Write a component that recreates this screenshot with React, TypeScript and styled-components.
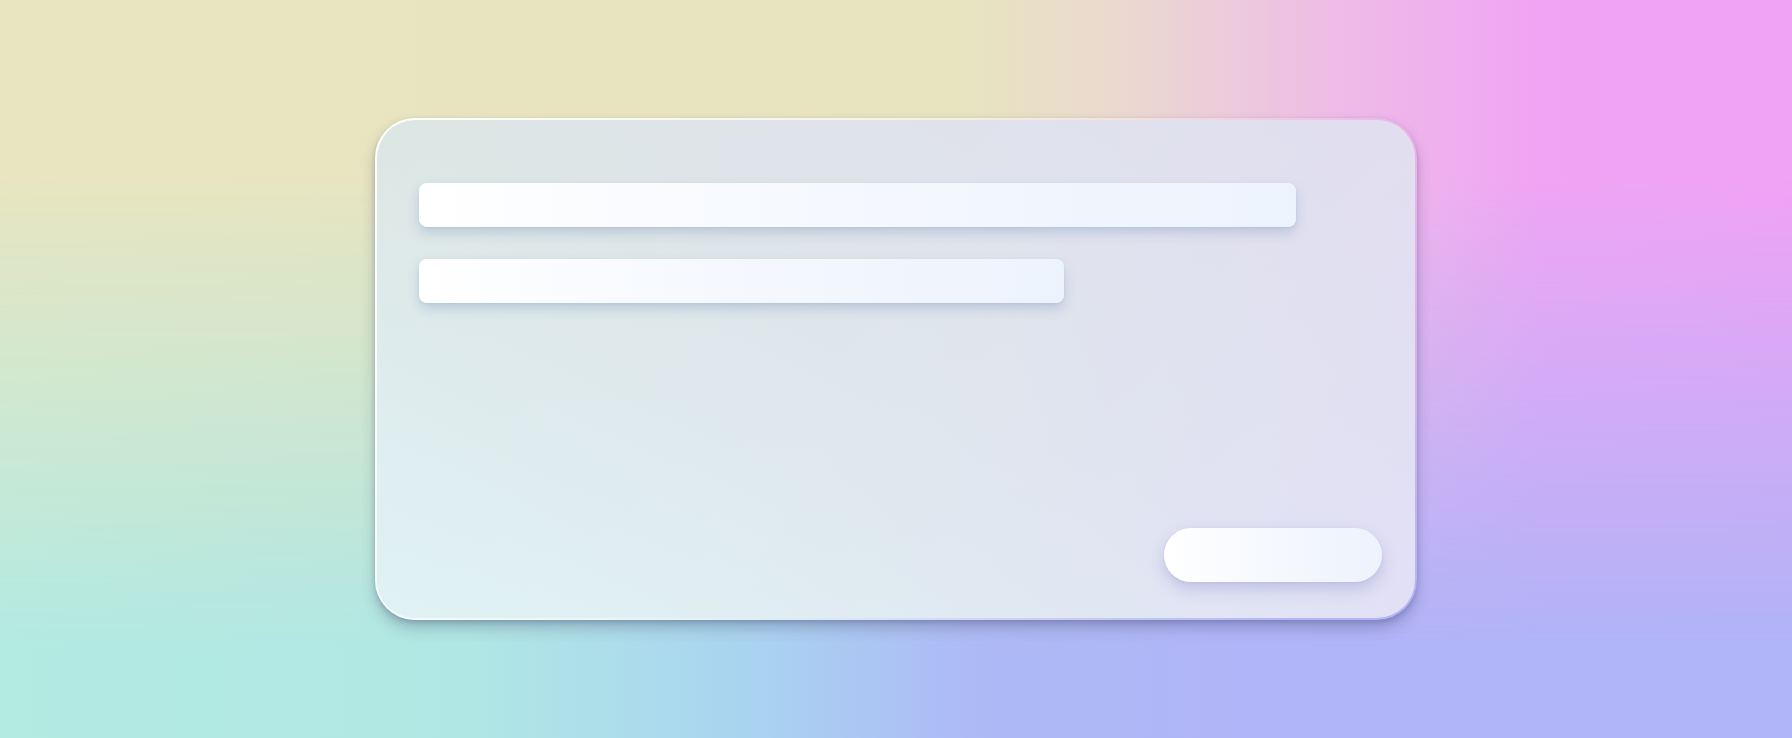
import styled, { createGlobalStyle } from 'styled-components'

const GlobalStyle = createGlobalStyle`
    html, body {
        margin: 0;
        padding: 0;
        height: 100%;
        font-family: 'Inter', 'Liberation Sans', sans-serif;
    }
    #root {
        height: 100%;
    }
`

export default function App() {
    return (
        <>
            <GlobalStyle />
            <Page>
                <Card>
                    <Lines>
                        <Line $width={877} />
                        <Line $width={645} />
                    </Lines>
                    <Footer>
                        <PillButton type="button" aria-label="Continue" />
                    </Footer>
                </Card>
            </Page>
        </>
    )
}

const Page = styled.main`
    position: relative;
    width: 100vw;
    height: 100vh;
    overflow: hidden;
    display: flex;
    align-items: center;
    justify-content: center;
    background: linear-gradient(
        to right,
        #b3ebe3 0%,
        #b0e7e4 26%,
        #a9d5f0 41%,
        #adbaf6 54%,
        #b0b4f8 70%,
        #b0b4f8 100%
    );

    &::before {
        content: '';
        position: absolute;
        inset: 0;
        background: linear-gradient(
            to right,
            #e8e5c0 0%,
            #e8e4c0 54%,
            #ebd6d2 64%,
            #eebde6 74%,
            #f0a4f4 86%,
            #f0a2f4 100%
        );
        -webkit-mask-image: linear-gradient(to bottom, #000 24%, transparent 88%);
        mask-image: linear-gradient(to bottom, #000 24%, transparent 88%);
    }
`

const Card = styled.section`
    position: relative;
    box-sizing: border-box;
    width: 1042px;
    height: 502px;
    padding: 63px 33px 36px 42px;
    display: flex;
    flex-direction: column;
    border-radius: 40px;
    border: 2px solid transparent;
    background:
        linear-gradient(
                to top right,
                rgba(224, 244, 246, 0.85) 0%,
                rgba(224, 240, 246, 0) 50%,
                rgba(226, 216, 240, 0.5) 100%
            )
            padding-box,
        linear-gradient(135deg, #dce6e3 0%, #dfe6ec 50%, #e2e0f6 100%) padding-box,
        linear-gradient(
                100deg,
                rgba(255, 255, 255, 0.95) 0%,
                rgba(255, 255, 255, 0.65) 40%,
                rgba(255, 255, 255, 0) 90%
            )
            border-box;
    box-shadow:
        0 8px 14px rgba(60, 66, 110, 0.3),
        0 2px 4px rgba(60, 70, 110, 0.22);
`

const Lines = styled.div`
    display: flex;
    flex-direction: column;
    gap: 32px;
`

const Line = styled.div<{ $width: number }>`
    width: ${p => p.$width}px;
    height: 44px;
    border-radius: 8px;
    background: linear-gradient(to right, #ffffff 0%, #f6f9fe 40%, #edf3fd 100%);
    box-shadow:
        0 6px 12px rgba(110, 140, 185, 0.3),
        0 1px 2px rgba(110, 140, 185, 0.12);
`

const Footer = styled.div`
    margin-top: auto;
    display: flex;
    justify-content: flex-end;
`

const PillButton = styled.button`
    width: 218px;
    height: 54px;
    border: none;
    border-radius: 27px;
    padding: 0;
    cursor: pointer;
    background: linear-gradient(to right, #ffffff 0%, #f6f9fe 45%, #eef2fd 100%);
    box-shadow:
        0 7px 16px rgba(120, 128, 200, 0.32),
        0 1px 3px rgba(120, 128, 200, 0.12);
`
